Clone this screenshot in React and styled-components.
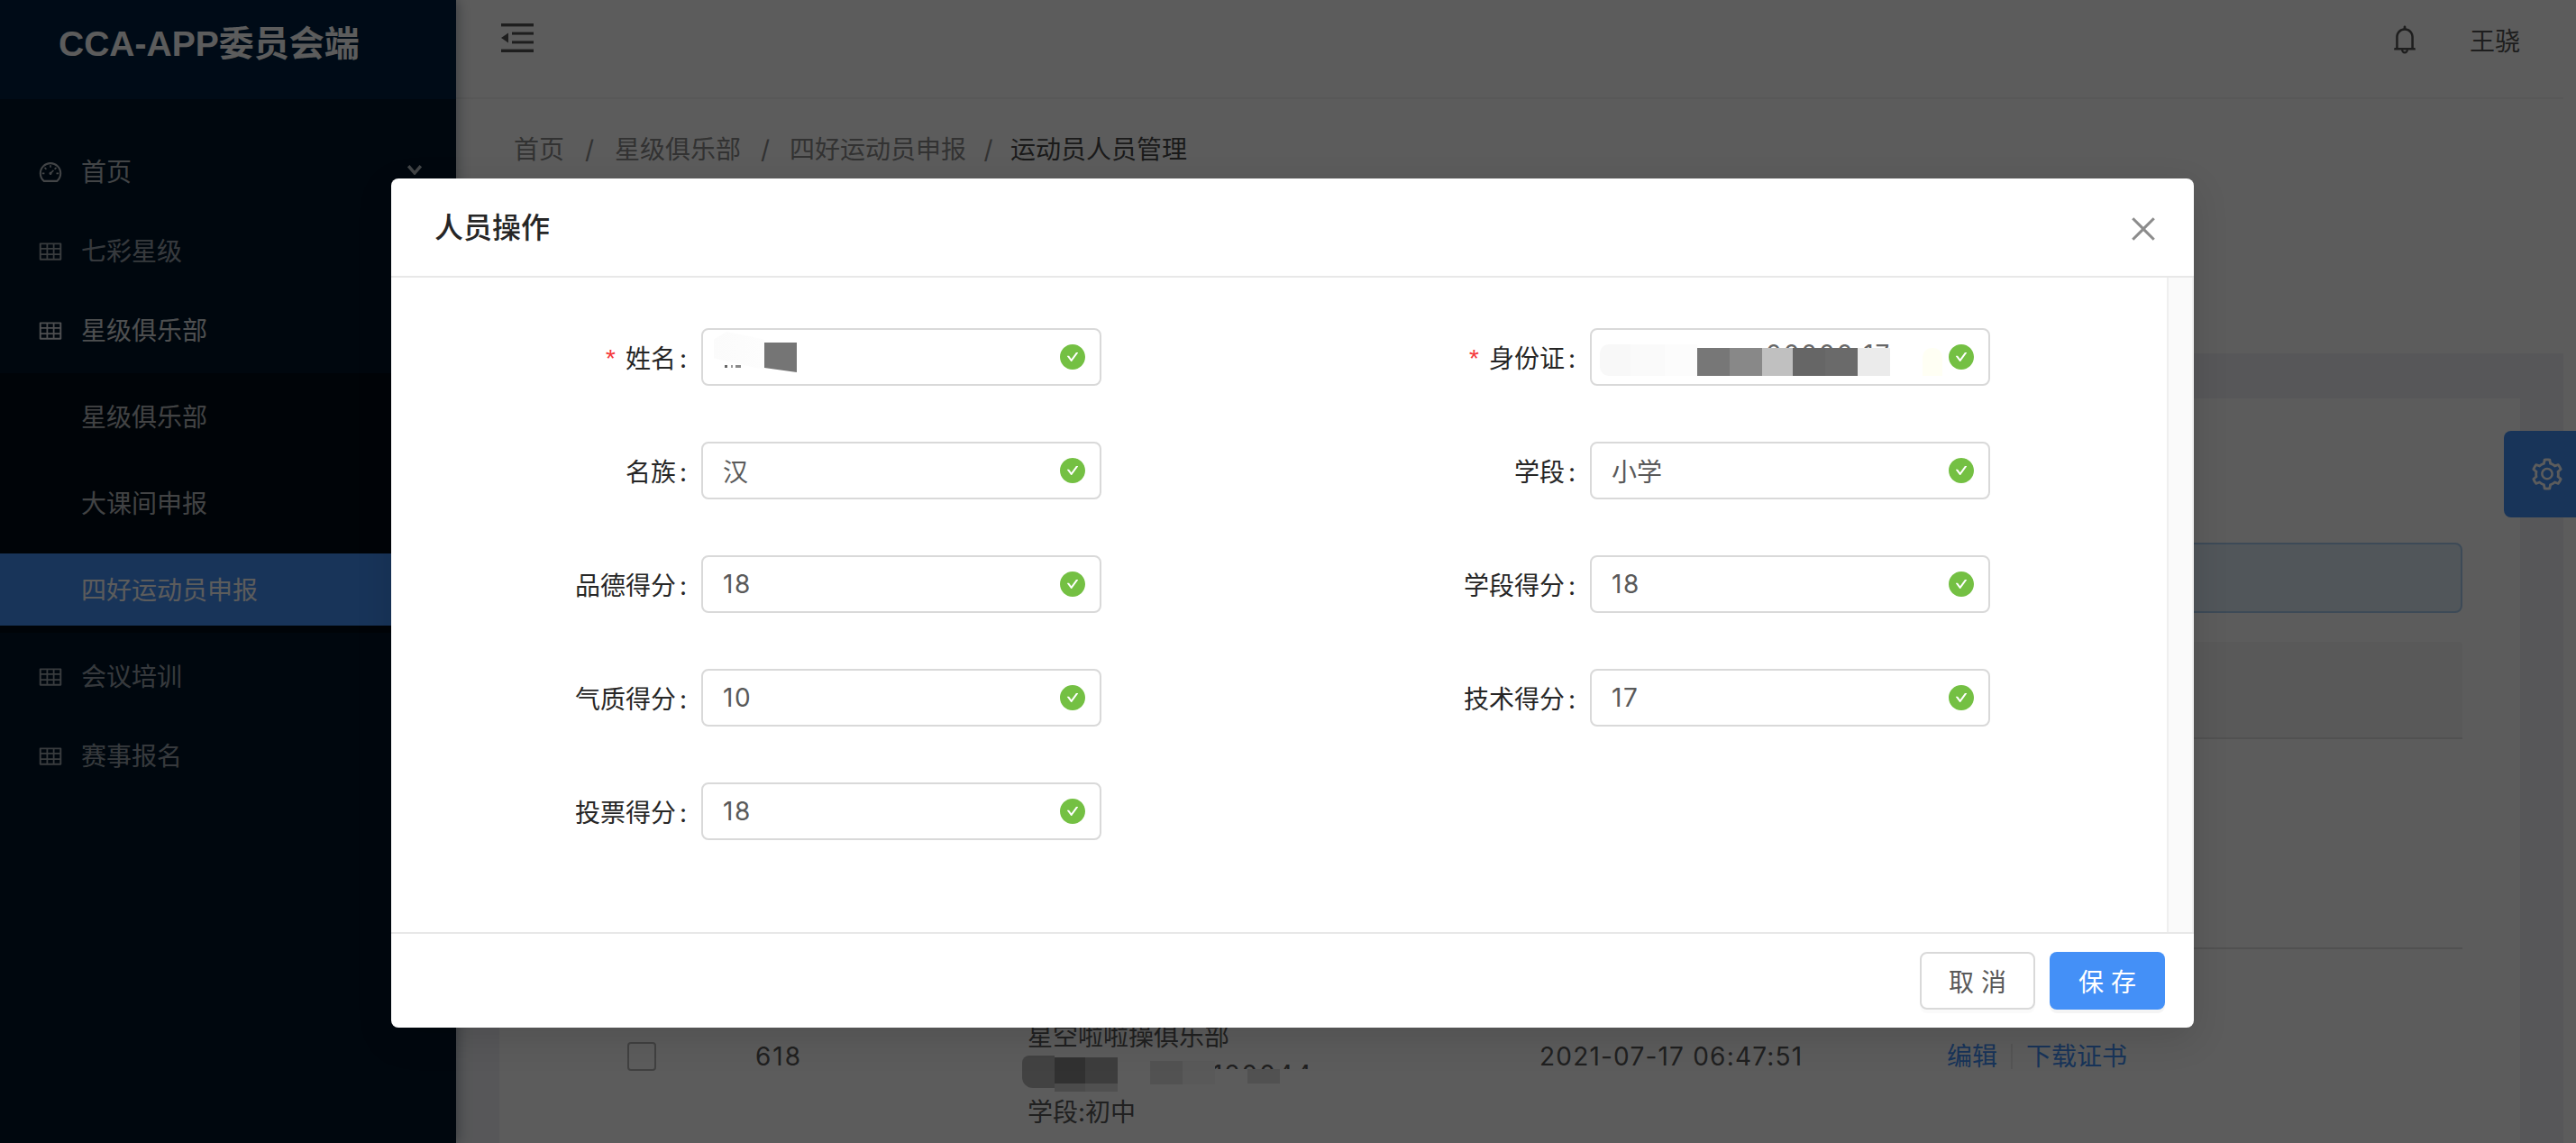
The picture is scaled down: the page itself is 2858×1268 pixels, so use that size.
import React from "react"
import styled, {createGlobalStyle} from "styled-components"
import {
    AiOutlineBell,
    AiOutlineClose,
    AiOutlineDashboard,
    AiOutlineSetting,
    AiOutlineTable,
    AiFillCheckCircle,
} from "react-icons/ai"

const Global = createGlobalStyle`
    html, body {
        margin: 0;
        padding: 0;
        background: #fff;
        overflow: hidden;
    }
    * {
        box-sizing: border-box;
    }
    body {
        font-family: Inter, "Noto Sans CJK SC", sans-serif;
        font-size: 28px;
        color: #262626;
    }
`

const primary = "#4490f7"

const Page = styled("div")`
    display: flex;
    width: 2858px;
    height: 1268px;
    overflow: hidden;
    position: relative;
`

const Sidebar = styled("aside")`
    width: 506px;
    flex: none;
    background: #001529;
    box-shadow: 2px 0 14px rgba(0, 21, 41, 0.35);
    position: relative;
    z-index: 2;
`

const Logo = styled("div")`
    height: 110px;
    background: #002140;
    padding: 26px 0 0 65px;
    font-family: "Liberation Sans", "Noto Sans CJK SC", sans-serif;
    font-size: 39px;
    line-height: 46px;
    font-weight: 700;
    color: #fff;
`

const Menu = styled("nav")`
    display: flex;
    flex-direction: column;
    gap: 8px;
    padding-top: 40px;
`

const toneColor = {
    dim: "rgba(255,255,255,0.62)",
    mid: "rgba(255,255,255,0.72)",
    bright: "rgba(255,255,255,0.85)",
    active: "#fff",
}

const MenuItem = styled("div")`
    height: 80px;
    display: flex;
    align-items: center;
    gap: 20px;
    padding-left: ${({$sub}) => ($sub ? "90px" : "42px")};
    padding-top: 1px;
    color: ${({$tone}) => toneColor[$tone || "dim"]};
    background: ${({$active}) => ($active ? primary : "transparent")};
    position: relative;
    line-height: 1;

    svg {
        flex: none;
    }
`

const Chevron = styled("svg")`
    position: absolute;
    left: 452px;
    top: 33px;
    width: 16px;
    height: 11px;
`

const SubMenu = styled("div")`
    display: flex;
    flex-direction: column;
    gap: 16px;
    padding: 8px 0;
    background: #000c17;
`

const Main = styled("div")`
    flex: 1;
    display: flex;
    flex-direction: column;
    width: 2338px;
    max-width: 2338px;
`

const Header = styled("header")`
    height: 110px;
    flex: none;
    display: flex;
    align-items: center;
    justify-content: space-between;
    padding: 0 48px 20px 50px;
    background: #fff;
    border-bottom: 2px solid #f3f3f3;
`

const FoldSvg = styled("svg")`
    margin-top: -4px;
`

const UserArea = styled("div")`
    display: flex;
    align-items: center;
    gap: 54px;
    color: #555;
`

const PageHead = styled("div")`
    height: 282px;
    flex: none;
    padding: 37px 0 0 64px;
    background: #fff;
`

const Crumbs = styled("div")`
    display: flex;
    align-items: center;
    height: 38px;
    line-height: 38px;
    color: #8c8c8c;
`

const CrumbSep = styled("span")`
    width: ${({$w}) => $w}px;
    text-align: center;
`

const CrumbLast = styled("span")`
    color: #4a4a4a;
`

const Content = styled("div")`
    flex: 1;
    background: #f0f2f5;
    padding: 50px 48px 0;
    min-height: 0;
`

const Card = styled("div")`
    background: #fff;
    padding: 160px 64px 0;
    height: 100%;
`

const Alert = styled("div")`
    height: 78px;
    background: #dfeff8;
    border: 2px solid #a9cdf0;
    border-radius: 8px;
    margin-bottom: 32px;
`

const TableHead = styled("div")`
    height: 108px;
    background: #f6f6f6;
    border-bottom: 2px solid #e0e0e0;
    border-radius: 4px 4px 0 0;
`

const EmptyRow = styled("div")`
    height: 233px;
    border-bottom: 2px solid #e0e0e0;
`

const Row = styled("div")`
    height: 238px;
    display: grid;
    grid-template-columns: 220px 302px 568px 452px 1fr;
    align-items: center;
    line-height: 42px;
    color: #595959;
`

const CheckBox = styled("span")`
    display: block;
    width: 32px;
    height: 32px;
    margin-left: 78px;
    border: 2px solid #b5b5b5;
    border-radius: 4px;
    background: #fff;
`

const Digits = styled("span")`
    letter-spacing: ${({$space}) => $space}px;
`

const ClubCell = styled("div")`
    align-self: start;
    padding-top: 76px;
`

const Actions = styled("div")`
    display: flex;
    align-items: center;
    color: ${primary};
`

const ActionSep = styled("span")`
    width: 2px;
    height: 28px;
    margin: 0 15px;
    background: #e8e8e8;
`

const Mosaic = styled("div")`
    display: flex;
    align-items: flex-start;
    position: relative;
    height: ${({$height}) => $height}px;
    margin-left: ${({$left}) => $left || 0}px;
`

const Pixel = styled("span")`
    flex: none;
    display: block;
    position: relative;
    z-index: 1;
    width: ${({$w}) => $w}px;
    height: ${({$h}) => $h}px;
    margin-top: ${({$top}) => $top || 0}px;
    background: ${({$c}) => $c};
    clip-path: ${({$clip}) => $clip || "none"};
    border-radius: ${({$r}) => $r || "0"};
`

// the number that lies under the blur, only its top sticks out
const BlurredText = styled("span")`
    position: absolute;
    left: ${({$x}) => $x}px;
    top: ${({$y}) => $y}px;
    line-height: 28px;
    color: ${({$color}) => $color};
    white-space: nowrap;
    letter-spacing: 2px;
`

const Speck = styled("span")`
    position: absolute;
    left: 12px;
    top: 39px;
    z-index: 2;
    width: 18px;
    height: 3px;
    background: linear-gradient(90deg, #666 0 3px, transparent 3px 7px, #999 7px 9px, transparent 9px 12px, #888 12px);
`

const SettingsTab = styled("div")`
    position: absolute;
    right: 0;
    top: 478px;
    width: 80px;
    height: 96px;
    display: flex;
    align-items: center;
    padding-left: 28px;
    background: ${primary};
    border-radius: 8px 0 0 8px;
    color: #fff;
    z-index: 3;
`

const Overlay = styled("div")`
    position: absolute;
    inset: 0;
    background: rgba(0, 0, 0, 0.64);
    z-index: 10;
`

const Modal = styled("section")`
    position: absolute;
    left: 434px;
    top: 198px;
    width: 2000px;
    height: 942px;
    display: flex;
    flex-direction: column;
    background: #fff;
    border-radius: 8px;
    box-shadow: 0 12px 40px rgba(0, 0, 0, 0.12);
    z-index: 20;
    overflow: hidden;
`

const ModalHeader = styled("div")`
    height: 110px;
    flex: none;
    display: flex;
    align-items: center;
    justify-content: space-between;
    padding: 0 37px 4px 48px;
    border-bottom: 2px solid #e8e8e8;
`

const ModalTitle = styled("div")`
    font-size: 32px;
    font-weight: 500;
    color: #262626;
`

const CloseBtn = styled("span")`
    display: flex;
    margin-top: 8px;
    color: #8c8c8c;
`

const ModalBody = styled("div")`
    flex: 1;
    display: flex;
    min-height: 0;
`

const Form = styled("div")`
    flex: 1;
    display: grid;
    grid-template-columns: 986px 1fr;
    grid-auto-rows: 64px;
    row-gap: 62px;
    padding: 56px 0 0 52px;
`

const Field = styled("div")`
    display: flex;
    align-items: center;
    height: 64px;
`

const Label = styled("label")`
    width: 292px;
    flex: none;
    text-align: right;
    padding-right: 16px;
    color: #262626;
    white-space: nowrap;

    &::after {
        content: ":";
        margin-left: 4px;
    }
`

const Required = styled("span")`
    color: #f5383b;
    margin-right: 8px;
    font-family: "Liberation Mono", monospace;
    font-size: 28px;
`

const InputBox = styled("div")`
    position: relative;
    width: 444px;
    height: 64px;
    display: flex;
    align-items: center;
    padding: 0 22px;
    border: 2px solid #d9d9d9;
    border-radius: 8px;
    color: #595959;
    background: #fff;
`

const OkIcon = styled("span")`
    position: absolute;
    right: 16px;
    top: 16px;
    display: flex;
    color: #74c043;
`

const Scrollbar = styled("div")`
    width: 30px;
    flex: none;
    background: #fafafa;
    border-left: 2px solid #efefef;
    border-right: 2px solid #f1f1f1;
`

const ModalFooter = styled("div")`
    height: 106px;
    flex: none;
    display: flex;
    justify-content: flex-end;
    gap: 16px;
    padding: 20px 32px 0 0;
    border-top: 2px solid #e8e8e8;
`

const Button = styled("button")`
    width: 128px;
    height: 64px;
    padding: 0;
    font: inherit;
    letter-spacing: 8px;
    text-indent: 8px;
    border-radius: 8px;
    color: ${({$primary}) => ($primary ? "#fff" : "#595959")};
    background: ${({$primary}) => ($primary ? primary : "#fff")};
    border: ${({$primary}) => ($primary ? "none" : "2px solid #d9d9d9")};
    box-shadow: 0 4px 0 rgba(0, 0, 0, ${({$primary}) => ($primary ? "0.045" : "0.018")});
`

const FoldIcon = () => (
    <FoldSvg width="36" height="32" viewBox="0 0 36 32" fill="#555">
        <rect x="0" y="0" width="36" height="3.4" />
        <rect x="12" y="9.6" width="24" height="3" />
        <rect x="12" y="19.4" width="24" height="3" />
        <rect x="0" y="28.6" width="36" height="3.4" />
        <path d="M8 10.6v10.8L0 16z" />
    </FoldSvg>
)

const Check = () => (
    <OkIcon><AiFillCheckCircle size={32} style={{margin: "-2px"}}/></OkIcon>
)

const NameBlur = () => (
    <Mosaic $height={60} $left={-10}>
        <Pixel $w={56} $h={42} $top={2} $c="linear-gradient(90deg,#fbfbfb,#fdfdfd)" $clip="polygon(0 20%,25% 0,100% 20%,100% 100%,0 70%)"/>
        <Pixel $w={36} $h={33} $top={14} $c="#757575" $clip="polygon(0 0,100% 0,100% 100%,0 85%)"/>
        <Speck/>
    </Mosaic>
)

const IdBlur = () => (
    <Mosaic $height={60} $left={-13}>
        <BlurredText $x={184} $y={13} $color="#666">00000 17</BlurredText>
        <Pixel $w={34} $h={35} $top={16} $c="#f8f8f8" $r="10px 0 0 10px"/>
        <Pixel $w={38} $h={35} $top={16} $c="#fafafa"/>
        <Pixel $w={36} $h={35} $top={16} $c="#fcfcfc"/>
        <Pixel $w={36} $h={31} $top={20} $c="#777"/>
        <Pixel $w={36} $h={31} $top={20} $c="#888"/>
        <Pixel $w={34} $h={31} $top={20} $c="#c0c0c0"/>
        <Pixel $w={36} $h={31} $top={20} $c="#666"/>
        <Pixel $w={36} $h={31} $top={20} $c="#6a6a6a"/>
        <Pixel $w={36} $h={31} $top={20} $c="#ebebeb"/>
        <Pixel $w={36} $h={31} $top={20} $c="#fff"/>
        <Pixel $w={22} $h={31} $top={20} $c="#fffff4" $r="10px 10px 0 0"/>
    </Mosaic>
)

const ClubBlur = () => (
    <Mosaic $height={42} $left={-6}>
        <BlurredText $x={211} $y={7} $color="#595959">120044</BlurredText>
        <Pixel $w={36} $h={36} $c="#b6b6b6" $r="8px 0 0 12px"/>
        <Pixel $w={34} $h={38} $top={2} $c="linear-gradient(180deg,#888 0,#888 76%,#cfcfcf 76%)"/>
        <Pixel $w={36} $h={38} $top={2} $c="linear-gradient(180deg,#a8a8a8 0,#a8a8a8 76%,#dedede 76%)"/>
        <Pixel $w={36} $h={28} $top={6} $c="#fff"/>
        <Pixel $w={36} $h={26} $top={6} $c="#e2e2e2"/>
        <Pixel $w={36} $h={26} $top={6} $c="#f6f6f6"/>
        <Pixel $w={36} $h={24} $top={15} $c="#fff"/>
        <Pixel $w={36} $h={16} $top={15} $c="#e0e0e0"/>
        <Pixel $w={40} $h={24} $top={15} $c="#fff"/>
    </Mosaic>
)

const fields = [
    {label: "姓名", required: true, value: <NameBlur/>},
    {label: "身份证", required: true, value: <IdBlur/>},
    {label: "名族", value: "汉"},
    {label: "学段", value: "小学"},
    {label: "品德得分", value: <Digits $space={1.5}>18</Digits>},
    {label: "学段得分", value: <Digits $space={1.5}>18</Digits>},
    {label: "气质得分", value: <Digits $space={1.5}>10</Digits>},
    {label: "技术得分", value: <Digits $space={1.5}>17</Digits>},
    {label: "投票得分", value: <Digits $space={1.5}>18</Digits>},
]

const App = () => {
    return (
        <Page>
            <Global/>
            <Sidebar>
                <Logo>CCA-APP委员会端</Logo>
                <Menu>
                    <MenuItem $tone="mid">
                        <AiOutlineDashboard size={28}/>首页
                        <Chevron viewBox="0 0 16 11" fill="none" stroke="currentColor" strokeWidth="3.4">
                            <path d="M1.2 1.2L8 9l6.8-7.8"/>
                        </Chevron>
                    </MenuItem>
                    <MenuItem><AiOutlineTable size={28}/>七彩星级</MenuItem>
                    <MenuItem $tone="bright"><AiOutlineTable size={28}/>星级俱乐部</MenuItem>
                    <SubMenu>
                        <MenuItem $sub $tone="mid">星级俱乐部</MenuItem>
                        <MenuItem $sub $tone="mid">大课间申报</MenuItem>
                        <MenuItem $sub $active $tone="active">四好运动员申报</MenuItem>
                    </SubMenu>
                    <MenuItem><AiOutlineTable size={28}/>会议培训</MenuItem>
                    <MenuItem><AiOutlineTable size={28}/>赛事报名</MenuItem>
                </Menu>
            </Sidebar>

            <Main>
                <Header>
                    <FoldIcon/>
                    <UserArea>
                        <AiOutlineBell size={36}/>
                        <span>王骁</span>
                    </UserArea>
                </Header>
                <PageHead>
                    <Crumbs>
                        <span>首页</span>
                        <CrumbSep $w={56}>/</CrumbSep>
                        <span>星级俱乐部</span>
                        <CrumbSep $w={54}>/</CrumbSep>
                        <span>四好运动员申报</span>
                        <CrumbSep $w={49}>/</CrumbSep>
                        <CrumbLast>运动员人员管理</CrumbLast>
                    </Crumbs>
                </PageHead>
                <Content>
                    <Card>
                        <Alert/>
                        <TableHead/>
                        <EmptyRow/>
                        <Row>
                            <CheckBox/>
                            <Digits $space={2}>618</Digits>
                            <ClubCell>
                                <div>星空啦啦操俱乐部</div>
                                <ClubBlur/>
                                <div>学段:初中</div>
                            </ClubCell>
                            <Digits $space={1.2}>2021-07-17 06:47:51</Digits>
                            <Actions>
                                <span>编辑</span>
                                <ActionSep/>
                                <span>下载证书</span>
                            </Actions>
                        </Row>
                    </Card>
                </Content>
            </Main>

            <SettingsTab><AiOutlineSetting size={40}/></SettingsTab>
            <Overlay/>

            <Modal>
                <ModalHeader>
                    <ModalTitle>人员操作</ModalTitle>
                    <CloseBtn><AiOutlineClose size={38}/></CloseBtn>
                </ModalHeader>
                <ModalBody>
                    <Form>
                        {fields.map((f) => (
                            <Field key={f.label}>
                                <Label>{f.required && <Required>*</Required>}{f.label}</Label>
                                <InputBox>
                                    {f.value}
                                    <Check/>
                                </InputBox>
                            </Field>
                        ))}
                    </Form>
                    <Scrollbar/>
                </ModalBody>
                <ModalFooter>
                    <Button>取消</Button>
                    <Button $primary>保存</Button>
                </ModalFooter>
            </Modal>
        </Page>
    )
}

export default App
